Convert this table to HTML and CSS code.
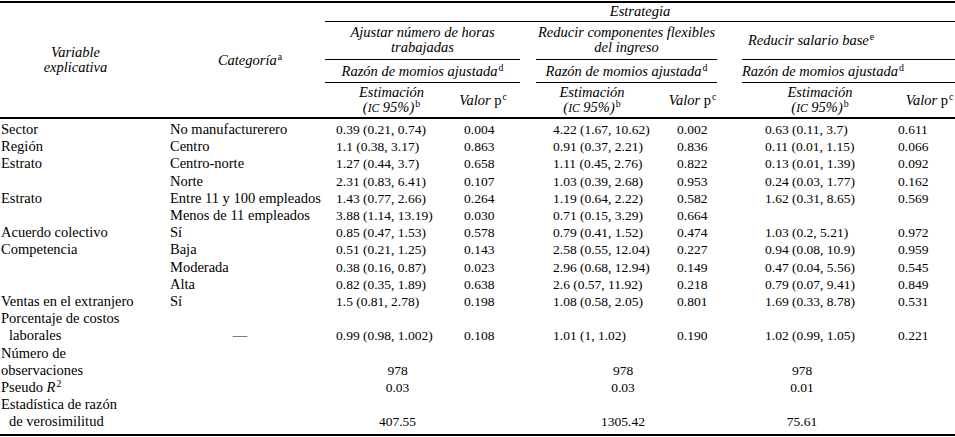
FILE: index.html
```html
<!DOCTYPE html>
<html lang="es">
<head>
<meta charset="utf-8">
<title>Estrategia</title>
<link rel="stylesheet" href="styles.css">
</head>
<body>
<div class="frame">
<table class="tbl">
  <colgroup>
    <col class="c-var"><col class="c-cat"><col class="c-est1"><col class="c-p1"><col class="c-gap1"><col class="c-est2"><col class="c-p2"><col class="c-gap2"><col class="c-est3"><col class="c-p3">
  </colgroup>
  <thead>
    <tr class="h1">
      <th rowspan="4" class="hv">Variable<br>explicativa</th>
      <th rowspan="4" class="hc">Categoría<sup>a</sup></th>
      <th colspan="8" class="rule">Estrategia</th>
    </tr>
    <tr class="h2">
      <th colspan="2" class="rule g1">Ajustar número de horas<br>trabajadas</th>
      <th class="gap"></th>
      <th colspan="2" class="rule g2">Reducir componentes flexibles<br>del ingreso</th>
      <th class="gap"></th>
      <th colspan="2" class="rule g3">Reducir salario base<sup>e</sup></th>
    </tr>
    <tr class="h3">
      <th colspan="2" class="rule g1">Razón de momios ajustada<sup>d</sup></th>
      <th class="gap"></th>
      <th colspan="2" class="rule g2">Razón de momios ajustada<sup>d</sup></th>
      <th class="gap"></th>
      <th colspan="2" class="rule g3">Razón de momios ajustada<sup>d</sup></th>
    </tr>
    <tr class="h4">
      <th class="he1">Estimación<br>(<span class="sc">IC</span> 95%)<sup>b</sup></th>
      <th class="hv1">Valor <span class="up">p</span><sup>c</sup></th>
      <th class="gap"></th>
      <th class="he2">Estimación<br>(<span class="sc">IC</span> 95%)<sup>b</sup></th>
      <th class="hv2">Valor <span class="up">p</span><sup>c</sup></th>
      <th class="gap"></th>
      <th class="he3">Estimación<br>(<span class="sc">IC</span> 95%)<sup>b</sup></th>
      <th class="hv3">Valor <span class="up">p</span><sup>c</sup></th>
    </tr>
  </thead>
  <tbody>
    <tr class="first">
      <td class="var">Sector</td><td class="cat">No manufacturerero</td>
      <td class="e1">0.39 (0.21, 0.74)</td><td class="v1">0.004</td><td></td>
      <td class="e2">4.22 (1.67, 10.62)</td><td class="v2">0.002</td><td></td>
      <td class="e3">0.63 (0.11, 3.7)</td><td class="v3">0.611</td>
    </tr>
    <tr>
      <td class="var">Región</td><td class="cat">Centro</td>
      <td class="e1">1.1 (0.38, 3.17)</td><td class="v1">0.863</td><td></td>
      <td class="e2">0.91 (0.37, 2.21)</td><td class="v2">0.836</td><td></td>
      <td class="e3">0.11 (0.01, 1.15)</td><td class="v3">0.066</td>
    </tr>
    <tr>
      <td class="var">Estrato</td><td class="cat">Centro-norte</td>
      <td class="e1">1.27 (0.44, 3.7)</td><td class="v1">0.658</td><td></td>
      <td class="e2">1.11 (0.45, 2.76)</td><td class="v2">0.822</td><td></td>
      <td class="e3">0.13 (0.01, 1.39)</td><td class="v3">0.092</td>
    </tr>
    <tr>
      <td class="var"></td><td class="cat">Norte</td>
      <td class="e1">2.31 (0.83, 6.41)</td><td class="v1">0.107</td><td></td>
      <td class="e2">1.03 (0.39, 2.68)</td><td class="v2">0.953</td><td></td>
      <td class="e3">0.24 (0.03, 1.77)</td><td class="v3">0.162</td>
    </tr>
    <tr>
      <td class="var">Estrato</td><td class="cat">Entre 11 y 100 empleados</td>
      <td class="e1">1.43 (0.77, 2.66)</td><td class="v1">0.264</td><td></td>
      <td class="e2">1.19 (0.64, 2.22)</td><td class="v2">0.582</td><td></td>
      <td class="e3">1.62 (0.31, 8.65)</td><td class="v3">0.569</td>
    </tr>
    <tr>
      <td class="var"></td><td class="cat">Menos de 11 empleados</td>
      <td class="e1">3.88 (1.14, 13.19)</td><td class="v1">0.030</td><td></td>
      <td class="e2">0.71 (0.15, 3.29)</td><td class="v2">0.664</td><td></td>
      <td class="e3"></td><td class="v3"></td>
    </tr>
    <tr>
      <td class="var">Acuerdo colectivo</td><td class="cat">Sí</td>
      <td class="e1">0.85 (0.47, 1.53)</td><td class="v1">0.578</td><td></td>
      <td class="e2">0.79 (0.41, 1.52)</td><td class="v2">0.474</td><td></td>
      <td class="e3">1.03 (0.2, 5.21)</td><td class="v3">0.972</td>
    </tr>
    <tr>
      <td class="var">Competencia</td><td class="cat">Baja</td>
      <td class="e1">0.51 (0.21, 1.25)</td><td class="v1">0.143</td><td></td>
      <td class="e2">2.58 (0.55, 12.04)</td><td class="v2">0.227</td><td></td>
      <td class="e3">0.94 (0.08, 10.9)</td><td class="v3">0.959</td>
    </tr>
    <tr>
      <td class="var"></td><td class="cat">Moderada</td>
      <td class="e1">0.38 (0.16, 0.87)</td><td class="v1">0.023</td><td></td>
      <td class="e2">2.96 (0.68, 12.94)</td><td class="v2">0.149</td><td></td>
      <td class="e3">0.47 (0.04, 5.56)</td><td class="v3">0.545</td>
    </tr>
    <tr>
      <td class="var"></td><td class="cat">Alta</td>
      <td class="e1">0.82 (0.35, 1.89)</td><td class="v1">0.638</td><td></td>
      <td class="e2">2.6 (0.57, 11.92)</td><td class="v2">0.218</td><td></td>
      <td class="e3">0.79 (0.07, 9.41)</td><td class="v3">0.849</td>
    </tr>
    <tr>
      <td class="var">Ventas en el extranjero</td><td class="cat">Sí</td>
      <td class="e1">1.5 (0.81, 2.78)</td><td class="v1">0.198</td><td></td>
      <td class="e2">1.08 (0.58, 2.05)</td><td class="v2">0.801</td><td></td>
      <td class="e3">1.69 (0.33, 8.78)</td><td class="v3">0.531</td>
    </tr>
    <tr>
      <td class="var">Porcentaje de costos<br><span class="hang">laborales</span></td><td class="cat dash">—</td>
      <td class="e1">0.99 (0.98, 1.002)</td><td class="v1">0.108</td><td></td>
      <td class="e2">1.01 (1, 1.02)</td><td class="v2">0.190</td><td></td>
      <td class="e3">1.02 (0.99, 1.05)</td><td class="v3">0.221</td>
    </tr>
    <tr>
      <td class="var">Número de<br>observaciones</td><td class="cat"></td>
      <td class="s1">978</td><td></td><td></td>
      <td class="s2">978</td><td></td><td></td>
      <td class="s3">978</td><td></td>
    </tr>
    <tr>
      <td class="var">Pseudo <i>R</i><sup>2</sup></td><td class="cat"></td>
      <td class="s1">0.03</td><td></td><td></td>
      <td class="s2">0.03</td><td></td><td></td>
      <td class="s3">0.01</td><td></td>
    </tr>
    <tr class="last">
      <td class="var">Estadística de razón<br><span class="hang">de verosimilitud</span></td><td class="cat"></td>
      <td class="s1">407.55</td><td></td><td></td>
      <td class="s2">1305.42</td><td></td><td></td>
      <td class="s3">75.61</td><td></td>
    </tr>
  </tbody>
</table>
</div>
</body>
</html>
```

FILE: styles.css
```css
html, body {
  margin: 0;
  padding: 0;
  background: #fff;
}

body {
  font-family: "Liberation Serif", "Times New Roman", serif;
  font-size: 14.5px;
  color: #000;
  padding-top: 1px;
}

.frame {
  width: 955px;
  height: 435px;
  box-sizing: border-box;
  border-top: 2px solid #000;
  border-bottom: 2px solid #000;
  overflow: hidden;
}

.tbl {
  width: 955px;
  table-layout: fixed;
  border-collapse: separate;
  border-spacing: 0;
}

.c-var { width: 165px; }
.c-cat { width: 160px; }
.c-est1 { width: 133px; }
.c-p1 { width: 62px; }
.c-gap1 { width: 16px; }
.c-est2 { width: 132px; }
.c-p2 { width: 49px; }
.c-gap2 { width: 25px; }
.c-est3 { width: 148px; }
.c-p3 { width: 65px; }

/* header */
.tbl th {
  font-weight: normal;
  font-style: italic;
  line-height: 15px;
  padding: 0;
  text-align: center;
  vertical-align: middle;
  white-space: nowrap;
}

.tbl th.rule {
  border-bottom: 1px solid #000;
}

.h1 th.rule { padding: 1px 0 2px; }
.h2 th { padding: 3px 0 4px; }
.h3 th { padding: 4px 0 3px; }
.h4 th { padding: 2px 0 1px; }

.h4 th,
.tbl th.hv,
.tbl th.hc {
  border-bottom: 2px solid #000;
}

.tbl th.hv { padding-right: 14px; }
.tbl th.hc { padding-left: 10px; }

.tbl th.g3 { padding-right: 75px; }

.tbl th.hv1 { padding-right: 12px; }
.tbl th.he2 { padding-right: 20px; }
.tbl th.he3 { padding-left: 8px; }
.tbl th.hv3 { padding-left: 14px; }

sup {
  font-style: normal;
  font-size: 0.68em;
  line-height: 0;
  vertical-align: 0.5em;
  padding-left: 1px;
}

.sc {
  font-size: 0.8em;
}

.up {
  font-style: normal;
}

/* body */
.tbl td {
  line-height: 17.2px;
  padding: 0;
  vertical-align: bottom;
  white-space: nowrap;
  text-align: left;
}

.tbl tr.first td { padding-top: 2px; }

.tbl td.var { padding-left: 1px; }
.tbl td.cat { padding-left: 5px; }

.tbl td.e1,
.tbl td.e2,
.tbl td.e3,
.tbl td.v1,
.tbl td.v2,
.tbl td.v3,
.tbl td.s1,
.tbl td.s2,
.tbl td.s3 {
  font-size: 13.5px;
}

.tbl td.e1 { padding-left: 11px; }
.tbl td.v1 { padding-left: 6px; }
.tbl td.e2 { padding-left: 17px; }
.tbl td.v2 { padding-left: 9px; }
.tbl td.e3 { padding-left: 23px; }
.tbl td.v3 { padding-left: 8px; }

.tbl td.dash {
  text-align: center;
  padding-left: 0;
  padding-right: 10px;
}

.hang {
  padding-left: 8px;
}

.tbl td.s1 { text-align: center; padding-left: 12px; }
.tbl td.s2 { text-align: center; padding-left: 42px; }
.tbl td.s3 { text-align: center; padding-right: 28px; }
```
